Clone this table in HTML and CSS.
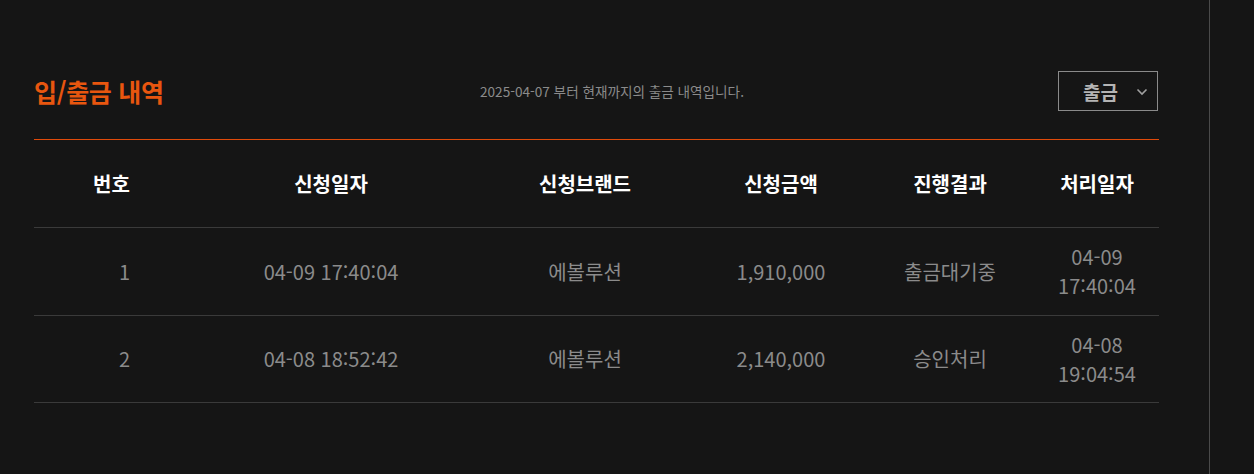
FILE: index.html
```
<!DOCTYPE html>
<html lang="ko">
<head>
    <meta charset="UTF-8">
    <meta name="viewport" content="width=device-width, initial-scale=1.0">
    <title>입/출금 내역</title>
    <link rel="stylesheet" href="styles.css">
</head>
<body>
    <!-- 본문 -->
    <div class="main">
        <div class="history-head">
            <h2 class="history-title">입/출금 내역</h2>
            <p class="history-desc">2025-04-07 부터 현재까지의 출금 내역입니다.</p>
            <div class="type-select">
                <span>출금</span>
                <svg class="chevron" width="12" height="8" viewBox="0 0 12 8"><path d="M1.5 1.5 6 6l4.5-4.5" fill="none" stroke="#a0a0a0" stroke-width="1.6"/></svg>
            </div>
        </div>

        <table class="history-table">
            <colgroup>
                <col style="width:155px">
                <col style="width:284px">
                <col style="width:224px">
                <col style="width:168px">
                <col style="width:170px">
                <col style="width:124px">
            </colgroup>
            <thead>
                <tr>
                    <th>번호</th>
                    <th>신청일자</th>
                    <th>신청브랜드</th>
                    <th>신청금액</th>
                    <th>진행결과</th>
                    <th>처리일자</th>
                </tr>
            </thead>
            <tbody>
                <tr>
                    <td class="num">1</td>
                    <td>04-09 17:40:04</td>
                    <td>에볼루션</td>
                    <td>1,910,000</td>
                    <td>출금대기중</td>
                    <td>04-09<br>17:40:04</td>
                </tr>
                <tr>
                    <td class="num">2</td>
                    <td>04-08 18:52:42</td>
                    <td>에볼루션</td>
                    <td>2,140,000</td>
                    <td>승인처리</td>
                    <td>04-08<br>19:04:54</td>
                </tr>
            </tbody>
        </table>
    </div>
    <div class="side"></div>
</body>
</html>
```

FILE: styles.css
```
/* 기본 */
body {
    font-family: "Noto Sans CJK KR", "Noto Sans", sans-serif;
    background-color: #151515;
    color: #8b8b8b;
    margin: 0;
    padding: 0;
    display: flex;
    min-height: 100vh;
}

.main {
    width: 1125px;
    padding: 71px 50px 0 34px;
    border-right: 1px solid #4a4a4a;
    flex-shrink: 0;
}

.side {
    flex-grow: 1;
}

/* 상단 */
.history-head {
    display: flex;
    align-items: center;
    height: 40px;
    margin-bottom: 28px;
}

.history-title {
    margin: 0;
    width: 446px;
    font-size: 25px;
    font-weight: 700;
    color: #e8560f;
    letter-spacing: -0.3px;
}

.history-desc {
    margin: 0;
    flex-grow: 1;
    font-size: 13.6px;
    color: #8b8b8b;
}

.type-select {
    display: flex;
    align-items: center;
    justify-content: space-between;
    padding: 0 9px 0 24px;
    box-sizing: border-box;
    width: 100px;
    height: 40px;
    margin-right: 1px;
    border: 1px solid #8a8a8a;
    font-size: 19px;
    font-weight: 700;
    color: #b4b4b4;
}

.chevron {
    margin-top: 2px;
}

/* 테이블 */
.history-table {
    width: 100%;
    border-collapse: collapse;
    table-layout: fixed;
    border-top: 1px solid #e04a0a;
}

.history-table th,
.history-table td {
    text-align: center;
    border-bottom: 1px solid #3a3a3a;
    padding: 0;
    font-size: 20px;
    line-height: 29px;
}

.history-table th {
    height: 87px;
    color: #ffffff;
    font-weight: 700;
}

.history-table td {
    height: 86.5px;
    color: #8b8b8b;
}

.history-table td.num {
    padding-left: 26px;
}
```
